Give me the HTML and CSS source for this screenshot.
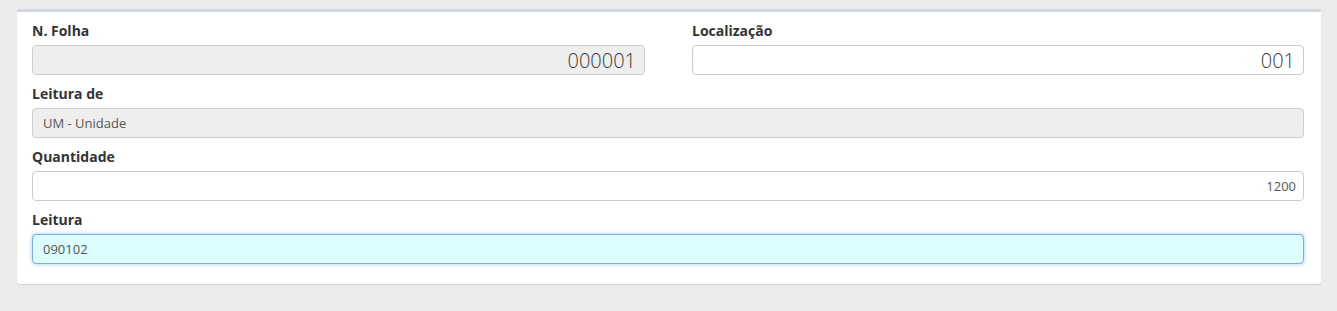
FILE: index.html
```html
<!DOCTYPE html>
<html lang="pt">
<head>
<meta charset="utf-8">
<link rel="stylesheet" href="styles.css">
</head>
<body>
<div class="page">
  <div class="box">
    <div class="row two">
      <div class="group">
        <label class="lbl">N. Folha</label>
        <div class="input readonly big right">000001</div>
      </div>
      <div class="group">
        <label class="lbl">Localização</label>
        <div class="input big right">001</div>
      </div>
    </div>
    <div class="group">
      <label class="lbl">Leitura de</label>
      <div class="input readonly">UM - Unidade</div>
    </div>
    <div class="group">
      <label class="lbl">Quantidade</label>
      <div class="input right small">1200</div>
    </div>
    <div class="group">
      <label class="lbl">Leitura</label>
      <div class="input focus">090102</div>
    </div>
  </div>
</div>
</body>
</html>
```

FILE: styles.css
```css
* { box-sizing: border-box; }
html, body { margin: 0; padding: 0; }
body {
  background: #ececec;
  font-family: "Open Sans", "Liberation Sans", sans-serif;
  color: #333;
  width: 1337px;
  height: 311px;
  overflow: hidden;
}
.page {
  padding: 9px 16px 0 17px;
}
.box {
  background: #fff;
  border-top: 3px solid #d2d6de;
  border-radius: 3px;
  box-shadow: 0 1px 1px rgba(0,0,0,0.12);
  padding: 10px 17px 10px 15px;
}
.row.two {
  display: grid;
  grid-template-columns: 613px 1fr;
  column-gap: 47px;
}
.group {
  margin-bottom: 10px;
  display: flex;
  flex-direction: column;
}
.lbl {
  display: block;
  font-size: 14px;
  font-weight: 700;
  line-height: 18px;
  margin-bottom: 5px;
  color: #333;
}
.input {
  height: 30px;
  border: 1px solid #ccc;
  border-radius: 4px;
  background: #fff;
  font-size: 13px;
  color: #555;
  line-height: 28px;
  padding: 0 9px 0 10px;
  white-space: nowrap;
}
.input.readonly { background: #eee; }
.input.right { text-align: right; }
.input.big {
  font-size: 20px;
  font-weight: 300;
  color: #3a3a3a;
  padding-right: 8px;
  line-height: 29px;
}
.input.small { font-size: 13px; padding-right: 7px; }
.input.focus {
  background: #dcfeff;
  border-color: #7aaedd;
  box-shadow: 0 0 4px rgba(102,175,233,0.6);
}
```
